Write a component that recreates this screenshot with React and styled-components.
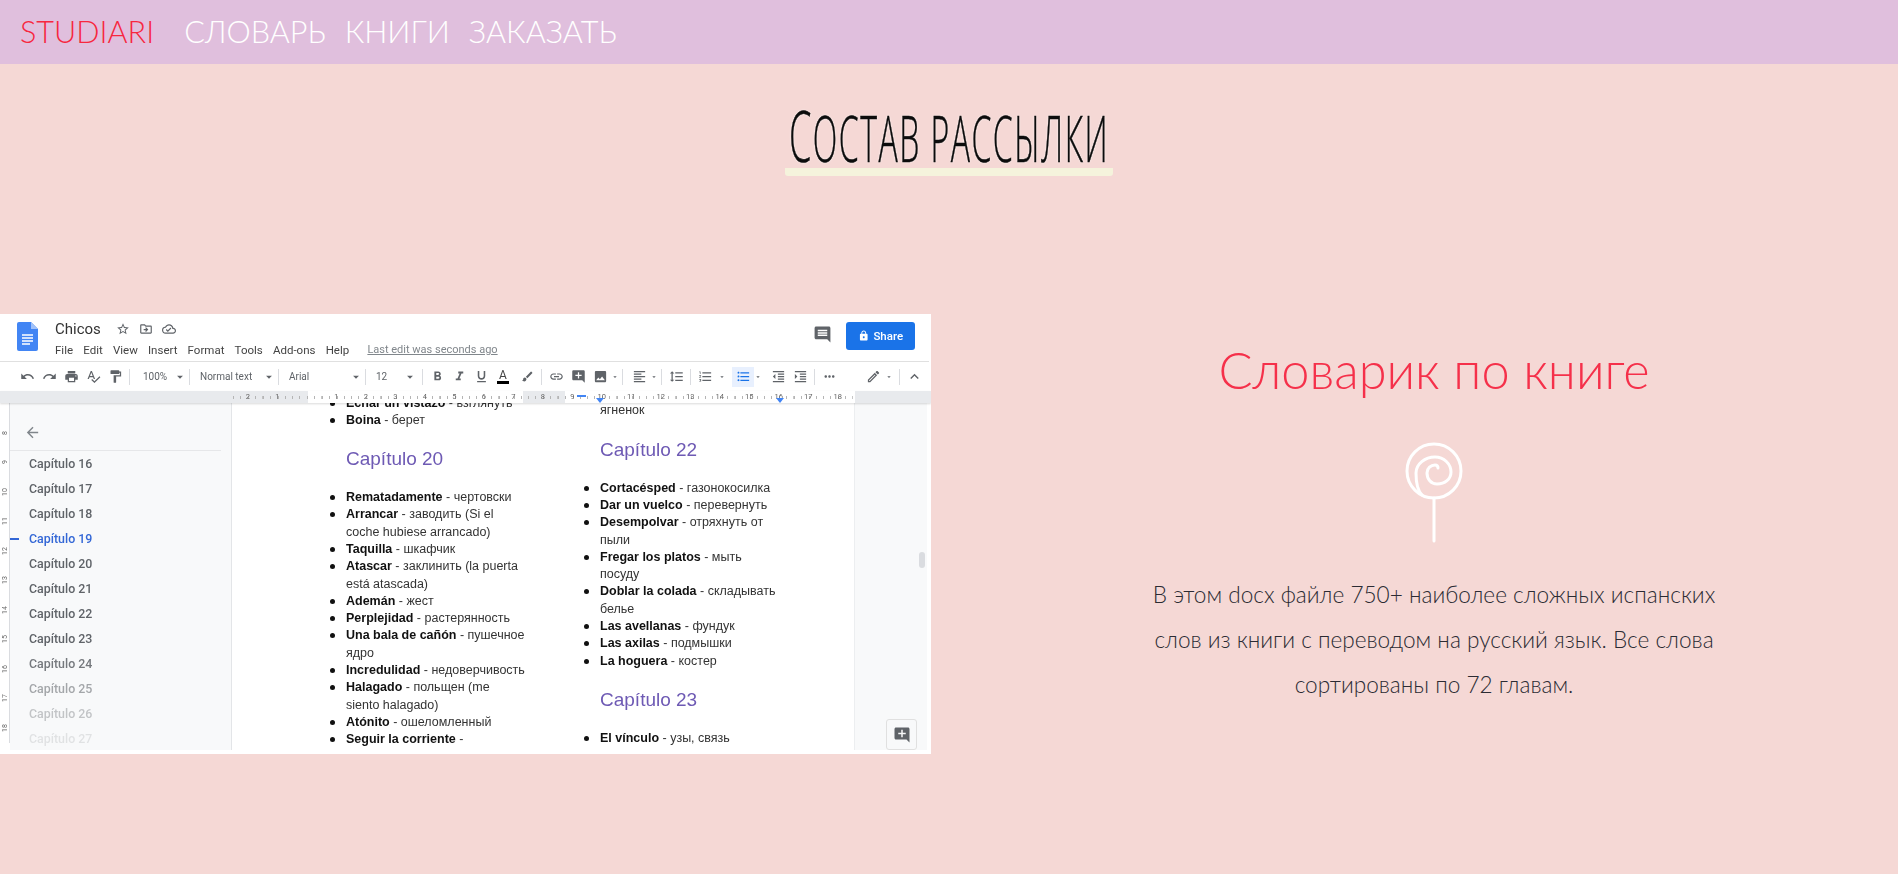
import React from 'react';
import styled, { createGlobalStyle } from 'styled-components';
import {
  MdUndo, MdRedo, MdPrint, MdSpellcheck, MdFormatPaint, MdStarBorder, MdOutlineCloudDone, MdOutlineDriveFileMove,
  MdComment, MdLock, MdFormatBold, MdFormatItalic, MdFormatUnderlined, MdBrush, MdLink, MdAddComment,
  MdInsertPhoto, MdFormatAlignLeft, MdFormatLineSpacing, MdFormatListNumbered, MdFormatListBulleted,
  MdFormatIndentDecrease, MdFormatIndentIncrease, MdMoreHoriz, MdOutlineEdit, MdExpandLess, MdArrowDropDown,
  MdArrowBack,
} from 'react-icons/md';

const GlobalStyle = createGlobalStyle`
  html, body {
    margin: 0;
    padding: 0;
    background: #f5d8d5;
  }
  body {
    overflow: hidden;
    font-family: "Lato", "Open Sans", sans-serif;
  }
`;

const Page = styled.div`
  width: 1898px;
  height: 874px;
  background: #f5d8d5;
`;

const Header = styled.header`
  height: 64px;
  background: #e0bfdd;
  display: flex;
  align-items: center;
  padding-left: 20px;
  font-size: 30.6px;
  font-weight: 300;
  line-height: 60px;
`;

const Brand = styled.a`
  color: #f7273f;
  margin-right: 30px;
`;

const NavLink = styled.a`
  color: #fff;
  margin-right: 19px;
`;

const TitleSection = styled.section`
  height: 250px;
  box-sizing: border-box;
  padding-top: 40px;
  display: flex;
  justify-content: center;
`;

const TitleBox = styled.div`
  width: 328px;
  height: 72px;
  box-sizing: border-box;
  border-bottom: 8px solid #f5f3dc;
  border-radius: 3px;
  display: flex;
  justify-content: center;
  align-items: flex-end;
  white-space: nowrap;
`;

const Title = styled.h1`
  margin: 0 0 -2px;
  flex: none;
  font-family: "Open Sans", sans-serif;
  font-weight: 300;
  font-size: 64px;
  line-height: 64px;
  letter-spacing: 3px;
  color: #0c0c0c;
  text-transform: uppercase;
  transform: scaleX(0.5);
  -webkit-text-stroke: 0.5px #0c0c0c;
  text-shadow: 0 0 3px #fff;
  &::first-letter {
    font-size: 72px;
  }
`;

const Row = styled.section`
  display: grid;
  grid-template-columns: 970px 1fr;
`;

const Shot = styled.div`
  width: 931px;
  height: 440px;
  background: #fff;
  overflow: hidden;
  position: relative;
  font-family: "Roboto", sans-serif;
  color: #444;
  filter: blur(0.5px);
`;

const TitleBar = styled.div`
  height: 47px;
  display: flex;
  box-sizing: border-box;
  padding: 8px 16px 0 17px;
`;

const DocIcon = styled.svg`
  width: 21px;
  height: 29px;
  flex: none;
  margin-right: 17px;
`;

const DocMeta = styled.div`
  flex: 1;
`;

const NameRow = styled.div`
  display: flex;
  align-items: center;
  height: 14px;
  font-size: 15px;
  color: #333;
  svg {
    font-size: 14px;
    color: #5f6368;
    margin-left: 9px;
  }
`;

const DocName = styled.span`
  width: 52px;
`;

const MenuRow = styled.div`
  display: flex;
  gap: 10.2px;
  font-size: 11.5px;
  margin-top: 7px;
  line-height: 14px;
`;

const LastEdit = styled.span`
  color: #80868b;
  font-size: 11px;
  text-decoration: underline;
  margin-left: 8px;
`;

const CommentButton = styled.span`
  font-size: 19px;
  color: #5f6368;
  margin: 3px 14px 0 0;
`;

const ShareButton = styled.div`
  width: 69px;
  height: 28px;
  background: #1a73e8;
  color: #fff;
  border-radius: 3px;
  display: flex;
  align-items: center;
  justify-content: center;
  gap: 4px;
  font-size: 11.5px;
  font-weight: 500;
`;

const Toolbar = styled.div`
  height: 29px;
  margin-right: 2px;
  border-top: 1px solid #e0e0e0;
  display: flex;
  align-items: center;
  padding-left: 16px;
  color: #5f6368;
`;

const Tool = styled.span`
  width: ${(p) => p.$w || 22}px;
  height: 20px;
  flex: none;
  display: flex;
  align-items: center;
  justify-content: center;
  font-size: ${(p) => p.$size || 15}px;
  margin-left: ${(p) => p.$ml || 0}px;
  background: ${(p) => (p.$active ? '#e8f0fe' : 'transparent')};
  color: ${(p) => (p.$active ? '#1a73e8' : 'inherit')};
`;

const Sep = styled.span`
  width: 1px;
  height: 16px;
  flex: none;
  background: #dadce0;
  margin: 0 ${(p) => p.$r ?? 3}px 0 ${(p) => p.$l ?? 3}px;
`;

const Select = styled.span`
  width: ${(p) => p.$w}px;
  box-sizing: border-box;
  flex: none;
  display: flex;
  align-items: center;
  justify-content: space-between;
  padding-left: ${(p) => p.$pl || 10}px;
  font-size: 10px;
  svg {
    font-size: 14px;
    margin-right: 2px;
  }
`;

const ColorA = styled.span`
  font-size: 12px;
  color: #444;
  border-bottom: 3px solid #000;
  line-height: 12px;
  padding: 0 2px;
`;

const Ruler = styled.div`
  height: 12px;
  display: flex;
  padding-left: 233px;
  font-size: 7.5px;
  line-height: 12px;
  color: #666;
  background: linear-gradient(
    to right,
    #e8eaed 308px,
    #fff 308px,
    #fff 523px,
    #e8eaed 523px,
    #e8eaed 565px,
    #fff 565px,
    #fff 855px,
    #e8eaed 855px
  );
  box-shadow: 0 1px 2px rgba(0, 0, 0, 0.15);
  position: relative;
  z-index: 1;
`;

const RulerCell = styled.span`
  width: 29.5px;
  flex: none;
  text-align: center;
  background-image: repeating-linear-gradient(to right, #b5b5b5 0 1px, transparent 1px 7.4px);
  background-size: 100% 3px;
  background-position: center;
  background-repeat: no-repeat;
`;

const Marker = styled.span`
  position: absolute;
  top: 7px;
  left: ${(p) => p.$x - 4}px;
  width: 0;
  height: 0;
  border-left: 4px solid transparent;
  border-right: 4px solid transparent;
  border-top: 5px solid #4285f4;
`;

const MarkerBar = styled.span`
  position: absolute;
  top: 4px;
  left: 577px;
  width: 9px;
  height: 2px;
  background: #4285f4;
`;

const Workspace = styled.div`
  height: 347px;
  display: flex;
  overflow: hidden;
  position: relative;
`;

const SideRuler = styled.div`
  width: 10px;
  height: 340px;
  flex: none;
  box-sizing: border-box;
  padding-top: 15px;
  overflow: hidden;
  border-right: 1px solid #dadce0;
  font-size: 7px;
  color: #666;
`;

const SideRulerCell = styled.div`
  height: 29.5px;
  display: flex;
  align-items: center;
  justify-content: center;
  span {
    transform: rotate(-90deg);
  }
`;

const Sidebar = styled.aside`
  width: 222px;
  flex: none;
  box-sizing: border-box;
  background: #f8f9fa;
  border-right: 1px solid #e3e5e8;
  overflow: hidden;
`;

const SideHead = styled.div`
  height: 48px;
  margin-right: 10px;
  box-sizing: border-box;
  padding: 21px 0 0 14px;
  font-size: 17px;
  color: #80868b;
  border-bottom: 1px solid #e6e7e9;
  display: flex;
  align-items: flex-start;
`;

const Chapter = styled.div`
  height: 25px;
  line-height: 25px;
  padding-left: 19px;
  font-size: 12.4px;
  font-weight: 500;
  position: relative;
  color: ${(p) => (p.$current ? '#3367d6' : '#5f6368')};
  opacity: ${(p) => p.$fade ?? 1};
  ${(p) =>
    p.$current &&
    `&::before {
      content: '';
      position: absolute;
      left: 0;
      top: 12px;
      width: 9px;
      height: 1.5px;
      background: #3367d6;
    }`}
`;

const DocPage = styled.div`
  width: 622px;
  flex: none;
  display: flex;
  padding-left: 94px;
  box-sizing: border-box;
  font-family: "Liberation Sans", sans-serif;
  color: #222;
`;

const DocColumn = styled.div`
  width: ${(p) => p.$w}px;
  flex: none;
  margin-top: ${(p) => p.$top}px;
`;

const BulletList = styled.ul`
  margin: 0;
  padding: 0 0 0 20px;
  width: 180px;
  list-style: none;
  font-size: 12.5px;
  line-height: 17.3px;
  color: #333;
  b {
    color: #111;
  }
  li {
    position: relative;
  }
  li::before {
    content: '';
    position: absolute;
    left: -16.5px;
    top: 6px;
    width: 5px;
    height: 5px;
    border-radius: 50%;
    background: #111;
  }
`;

const PlainLine = styled.div`
  padding-left: 20px;
  font-size: 12.5px;
  line-height: 17.3px;
  color: #333;
`;

const DocHeading = styled.h3`
  margin: 17px 0 18px 20px;
  font-size: 19px;
  line-height: 25px;
  font-weight: 400;
  color: #6e5ab4;
`;

const Gutter = styled.div`
  width: 73px;
  flex: none;
  background: #f8f9fa;
  border-left: 1px solid #eceef0;
  box-sizing: border-box;
`;

const ScrollThumb = styled.span`
  position: absolute;
  left: 919px;
  top: 149px;
  width: 6px;
  height: 16px;
  border-radius: 3px;
  background: #dadce0;
`;

const FloatButton = styled.span`
  position: absolute;
  left: 886px;
  top: 316px;
  width: 29px;
  height: 29px;
  border: 1px solid #e0e0e0;
  border-radius: 3px;
  background: #f8f9fa;
  display: flex;
  align-items: center;
  justify-content: center;
  font-size: 18px;
  color: #5f6368;
`;

const InfoColumn = styled.div`
  display: flex;
  flex-direction: column;
  align-items: center;
  padding-top: 26px;
`;

const InfoHeading = styled.h2`
  margin: 0;
  font-size: 50.5px;
  line-height: 60px;
  font-weight: 300;
  color: #f5304a;
`;

const Lollipop = styled.svg`
  width: 100px;
  height: 104px;
  margin-top: 40px;
  display: block;
`;

const InfoText = styled.p`
  margin: 28px 0 0;
  width: 590px;
  text-align: center;
  font-size: 22.6px;
  font-weight: 300;
  line-height: 45px;
  color: #2b2b33;
`;

const chapters = [16, 17, 18, 19, 20, 21, 22, 23, 24, 25, 26, 27];
const fades = { 24: 0.85, 25: 0.55, 26: 0.35, 27: 0.15 };
const rulerLabels = ['2', '1', '', ...Array.from({ length: 18 }, (_, i) => String(i + 1))];
const sideLabels = [8, 9, 10, 11, 12, 13, 14, 15, 16, 17, 18];

const Word = ({ term, children }) => (
  <li>
    <b>{term}</b> - {children}
  </li>
);

const DocsScreenshot = () => (
  <Shot>
    <TitleBar>
      <DocIcon viewBox="0 0 21 29">
        <path d="M2 0h12l7 7v20a2 2 0 0 1-2 2H2a2 2 0 0 1-2-2V2a2 2 0 0 1 2-2z" fill="#4285f4" />
        <path d="M14 0l7 7h-7z" fill="#a1c2fa" />
        <path d="M5 13h11M5 16h11M5 19h11M5 22h8" stroke="#fff" strokeWidth="1.6" />
      </DocIcon>
      <DocMeta>
        <NameRow>
          <DocName>Chicos</DocName>
          <MdStarBorder />
          <MdOutlineDriveFileMove />
          <MdOutlineCloudDone />
        </NameRow>
        <MenuRow>
          <span>File</span>
          <span>Edit</span>
          <span>View</span>
          <span>Insert</span>
          <span>Format</span>
          <span>Tools</span>
          <span>Add-ons</span>
          <span>Help</span>
          <LastEdit>Last edit was seconds ago</LastEdit>
        </MenuRow>
      </DocMeta>
      <CommentButton>
        <MdComment />
      </CommentButton>
      <ShareButton>
        <MdLock />
        Share
      </ShareButton>
    </TitleBar>
    <Toolbar>
      <Tool><MdUndo /></Tool>
      <Tool><MdRedo /></Tool>
      <Tool><MdPrint /></Tool>
      <Tool><MdSpellcheck /></Tool>
      <Tool><MdFormatPaint /></Tool>
      <Sep />
      <Select $w={56}>100% <MdArrowDropDown /></Select>
      <Sep $l={0} $r={0} />
      <Select $w={88}>Normal text <MdArrowDropDown /></Select>
      <Sep $l={0} $r={0} />
      <Select $w={86}>Arial <MdArrowDropDown /></Select>
      <Sep $l={0} $r={0} />
      <Select $w={53}>12 <MdArrowDropDown /></Select>
      <Sep />
      <Tool><MdFormatBold /></Tool>
      <Tool><MdFormatItalic /></Tool>
      <Tool><MdFormatUnderlined /></Tool>
      <Tool><ColorA>A</ColorA></Tool>
      <Tool $ml={2} $size={13}><MdBrush /></Tool>
      <Sep />
      <Tool><MdLink /></Tool>
      <Tool><MdAddComment /></Tool>
      <Tool><MdInsertPhoto /></Tool>
      <Tool $w={8} $size={12}><MdArrowDropDown /></Tool>
      <Sep />
      <Tool $ml={2}><MdFormatAlignLeft /></Tool>
      <Tool $w={8} $size={12}><MdArrowDropDown /></Tool>
      <Sep />
      <Tool><MdFormatLineSpacing /></Tool>
      <Sep />
      <Tool><MdFormatListNumbered /></Tool>
      <Tool $w={8} $ml={2} $size={12}><MdArrowDropDown /></Tool>
      <Tool $active $ml={6}><MdFormatListBulleted /></Tool>
      <Tool $w={8} $size={12}><MdArrowDropDown /></Tool>
      <Tool $ml={5}><MdFormatIndentDecrease /></Tool>
      <Tool><MdFormatIndentIncrease /></Tool>
      <Sep />
      <Tool><MdMoreHoriz /></Tool>
      <Tool $ml={22}><MdOutlineEdit /></Tool>
      <Tool $w={8} $ml={1} $size={12}><MdArrowDropDown /></Tool>
      <Sep $l={6} />
      <Tool $size={17}><MdExpandLess /></Tool>
    </Toolbar>
    <Ruler>
      {rulerLabels.map((label, i) => (
        <RulerCell key={i}>{label}</RulerCell>
      ))}
      <MarkerBar />
      <Marker $x={600} />
      <Marker $x={780} />
    </Ruler>
    <Workspace>
      <SideRuler>
        {sideLabels.map((n) => (
          <SideRulerCell key={n}>
            <span>{n}</span>
          </SideRulerCell>
        ))}
      </SideRuler>
      <Sidebar>
        <SideHead>
          <MdArrowBack />
        </SideHead>
        {chapters.map((n) => (
          <Chapter key={n} $current={n === 19} $fade={fades[n]}>
            Capítulo {n}
          </Chapter>
        ))}
      </Sidebar>
      <DocPage>
        <DocColumn $w={254} $top={-8.5}>
          <BulletList>
            <Word term="Echar un vistazo">взглянуть</Word>
            <Word term="Boina">берет</Word>
          </BulletList>
          <DocHeading>Capítulo 20</DocHeading>
          <BulletList>
            <Word term="Rematadamente">чертовски</Word>
            <Word term="Arrancar">заводить (Si el coche hubiese arrancado)</Word>
            <Word term="Taquilla">шкафчик</Word>
            <Word term="Atascar">заклинить (la puerta está atascada)</Word>
            <Word term="Ademán">жест</Word>
            <Word term="Perplejidad">растерянность</Word>
            <Word term="Una bala de cañón">пушечное ядро</Word>
            <Word term="Incredulidad">недоверчивость</Word>
            <Word term="Halagado">польщен (me siento halagado)</Word>
            <Word term="Atónito">ошеломленный</Word>
            <Word term="Seguir la corriente"></Word>
          </BulletList>
        </DocColumn>
        <DocColumn $w={200} $top={-0.6}>
          <PlainLine>ягненок</PlainLine>
          <DocHeading>Capítulo 22</DocHeading>
          <BulletList>
            <Word term="Cortacésped ">газонокосилка</Word>
            <Word term="Dar un vuelco">перевернуть</Word>
            <Word term="Desempolvar">отряхнуть от пыли</Word>
            <Word term="Fregar los platos">мыть посуду</Word>
            <Word term="Doblar la colada">складывать белье</Word>
            <Word term="Las avellanas">фундук</Word>
            <Word term="Las axilas">подмышки</Word>
            <Word term="La hoguera">костер</Word>
          </BulletList>
          <DocHeading>Capítulo 23</DocHeading>
          <BulletList>
            <Word term="El vínculo">узы, связь</Word>
          </BulletList>
        </DocColumn>
      </DocPage>
      <Gutter />
      <ScrollThumb />
      <FloatButton>
        <MdAddComment />
      </FloatButton>
    </Workspace>
  </Shot>
);

export default function App() {
  return (
    <Page>
      <GlobalStyle />
      <Header>
        <Brand>STUDIARI</Brand>
        <NavLink>СЛОВАРЬ</NavLink>
        <NavLink>КНИГИ</NavLink>
        <NavLink>ЗАКАЗАТЬ</NavLink>
      </Header>
      <TitleSection>
        <TitleBox>
          <Title>Состав рассылки</Title>
        </TitleBox>
      </TitleSection>
      <Row>
        <DocsScreenshot />
        <InfoColumn>
          <InfoHeading>Словарик по книге</InfoHeading>
          <Lollipop viewBox="0 0 100 104" fill="none" stroke="#fff" strokeWidth="3" strokeLinecap="round">
            <circle cx="50" cy="31" r="27" />
            <path d="M38 55C33 50 32 40 32 33C32 24 41 17 51 17C60 17 67 24 67 32C67 39 61 44 53 44C47 44 43 39 43 33C43 28 47 25 51 25C53 25 54 26 54 28" />
            <path d="M50 58V101" />
          </Lollipop>
          <InfoText>
            В этом docx файле 750+ наиболее сложных испанских слов из книги с переводом на русский язык. Все слова
            сортированы по 72 главам.
          </InfoText>
        </InfoColumn>
      </Row>
    </Page>
  );
}
